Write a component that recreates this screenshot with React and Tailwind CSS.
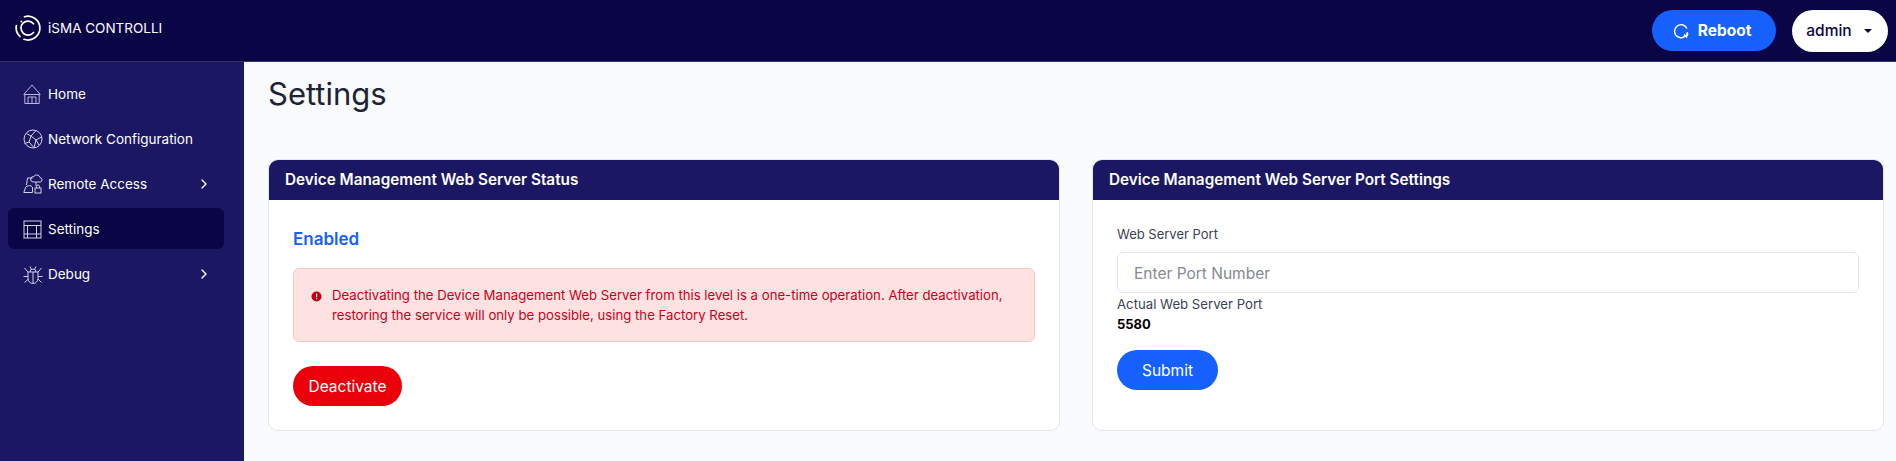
import React from "react";
import { ChevronRight } from "lucide-react";

const HomeIcon = () => (
  <svg width="18" height="20" viewBox="0 0 18 20" fill="none" stroke="#b9b7da" strokeWidth="1">
    <path d="M0.8 10.5 9 1l8.2 9.5Z" />
    <path d="M1.8 10.5v9h14.4v-9" />
    <path d="M5 19.5v-6.5h8v6.5M9 13v6.5" />
  </svg>
);

const NetworkIcon = () => (
  <svg width="20" height="20" viewBox="0 0 20 20" fill="none" stroke="#d3d2e8" strokeWidth="1">
    <circle cx="10" cy="10" r="9" />
    <path d="M3.5 4.5 8 7l5-5.5M8 7l-2 6-4.5 1.5M6 13l5 5.5M8 7l5 4 5.5-3M13 11l-2 7.5M13 11l3 5" />
  </svg>
);

const RemoteIcon = () => (
  <svg width="20" height="20" viewBox="0 0 20 20" fill="none" stroke="#d3d2e8" strokeWidth="1">
    <path d="M10 8H17.3a2.3 2.3 0 0 0-.3-4.5 3.4 3.4 0 0 0-6.2-.9A2.7 2.7 0 0 0 10 8Z" />
    <path d="M9.5 4H4.5L3.5 11M13 8v4" />
    <path d="M0.8 18.5 2.5 13.5a2.5 2.5 0 0 1 3-1.5 2.6 2.6 0 0 1 4 2v4.5Z" />
    <rect x="12" y="14" width="6" height="5" />
    <path d="M13.5 14v-1.5a1.5 1.5 0 0 1 3 0V14" />
  </svg>
);

const SettingsIcon = () => (
  <svg width="19" height="19" viewBox="0 0 19 19" fill="none" stroke="#d3d2e8" strokeWidth="1">
    <rect x="1" y="1" width="17" height="17" />
    <path d="M1 5.5h17M1 14h17M4.5 5.5V18M13.5 5.5V18" />
  </svg>
);

const BugIcon = () => (
  <svg width="20" height="20" viewBox="0 0 20 20" fill="none" stroke="#d3d2e8" strokeWidth="1">
    <path d="M5 8h10v6.5a5 5 0 0 1-10 0Z" />
    <path d="M7 8a3 3 0 0 1 6 0M10 8v11M7 2.5 8.5 5.5M13 2.5 11.5 5.5" />
    <path d="M1.5 4 5 8M18.5 4 15 8M0.5 12.5H5M15 12.5h4.5M1.5 18.5 5.5 15M18.5 18.5l-3.5-3.5" />
  </svg>
);

const Logo = () => (
  <svg width="26" height="26" viewBox="0 0 26 26" fill="none" stroke="#fff" strokeWidth="1.7" strokeLinecap="round">
    <path d="M9.5 1.8A11.9 11.9 0 0 1 24.9 13 11.9 11.9 0 0 1 9 24.3" />
    <path d="M1.4 10.5A12 12 0 0 0 5 21.5" />
    <path d="M6.3 6.5v.01" strokeWidth="2" />
    <path d="M18.5 8.8a7 7 0 1 0 0 8.6" />
  </svg>
);

const menu = [
  { label: "Home", icon: <HomeIcon /> },
  { label: "Network Configuration", icon: <NetworkIcon /> },
  { label: "Remote Access", icon: <RemoteIcon />, arrow: true },
  { label: "Settings", icon: <SettingsIcon />, active: true },
  { label: "Debug", icon: <BugIcon />, arrow: true },
];

const Card = ({ title, children }) => (
  <div className="rounded-[10px] border border-[#e4e6ec] bg-white overflow-hidden h-[272px]">
    <div className="h-[40px] bg-[#1b1763] px-4 pt-[1px] flex items-center text-white text-[15.3px] font-semibold">
      {title}
    </div>
    {children}
  </div>
);

export default function App() {
  return (
    <div className="h-[461px] flex flex-col bg-[#f9fafc] overflow-hidden" style={{ fontFamily: '"Inter", "Liberation Sans", sans-serif' }}>
      <header className="h-[62px] shrink-0 bg-[#0a0545] border-b border-[#34306f] flex items-center justify-between pl-[15px] pr-[8px]">
        <div className="flex items-center gap-[7px] pb-[5px] text-white text-[13.5px]">
          <Logo />
          <span>iSMA CONTROLLI</span>
        </div>
        <div className="flex items-center gap-4">
          <button className="h-[41px] w-[124px] pr-1 rounded-full bg-[#1660fe] text-white text-[15.5px] font-bold flex items-center justify-center gap-[9px]">
            <svg width="16" height="16" viewBox="0 0 16 16" fill="none" stroke="#fff" strokeWidth="1.4">
              <path d="M14 5.5A6.5 6.5 0 1 0 14.5 9" />
              <path d="M15 10.5 13.5 14 11 11.5" />
            </svg>
            Reboot
          </button>
          <button className="h-[42px] w-[96px] pr-[2px] rounded-full bg-white text-[#0a0545] text-[15.5px] font-medium flex items-center justify-center gap-[12px]">
            admin
            <span className="w-0 h-0 border-x-[4px] border-x-transparent border-t-[4px] border-t-[#0a0545]" />
          </button>
        </div>
      </header>
      <div className="flex flex-1 min-h-0">
        <aside className="w-[244px] shrink-0 bg-[#1b1763] pl-2 pr-5 pt-[11px] flex flex-col gap-[4px]">
          {menu.map((m) => (
            <div
              key={m.label}
              className={`h-[41px] rounded-md pl-[15px] pr-[12px] pt-[1px] flex items-center text-white text-[13.5px] ${m.active ? "bg-[#0a0545]" : ""}`}
            >
              <span className="w-[25px] flex justify-start">{m.icon}</span>
              <span className="flex-1">{m.label}</span>
              {m.arrow && <ChevronRight size={16} color="#fff" />}
            </div>
          ))}
        </aside>
        <main className="flex-1 pl-6 pr-[12px]">
          <h1 className="text-[31px] leading-[38px] text-[#1c2434] mt-[13px] mb-[46px]">Settings</h1>
          <div className="grid grid-cols-2 gap-8">
            <Card title="Device Management Web Server Status">
              <div className="px-6 pt-[28px]">
                <div className="text-[#1660fe] text-[17px] font-semibold leading-[22px]">Enabled</div>
                <div className="mt-[18px] h-[74px] rounded-md border border-[#fdc4c4] bg-[#fee2e2] flex items-start gap-[10px] pl-[17px] pr-4 pt-[16px] text-[13.2px] leading-[20px] text-[#c9001a]">
                  <svg width="11" height="11" viewBox="0 0 11 11" className="shrink-0 mt-[6px]">
                    <circle cx="5.5" cy="5.5" r="5" fill="#c00010" />
                    <rect x="5" y="2.5" width="1.2" height="3.8" fill="#fee2e2" />
                    <rect x="5" y="7.2" width="1.2" height="1.2" fill="#fee2e2" />
                  </svg>
                  <p>Deactivating the Device Management Web Server from this level is a one-time operation. After deactivation, restoring the service will only be possible, using the Factory Reset.</p>
                </div>
                <button className="mt-[24px] h-[40px] w-[109px] pt-[1px] rounded-full bg-[#e90009] text-white text-[15.5px]">Deactivate</button>
              </div>
            </Card>
            <Card title="Device Management Web Server Port Settings">
              <div className="px-6 pt-[24px]">
                <label className="block text-[13px] leading-[20px] text-[#3a4254]">Web Server Port</label>
                <input
                  placeholder="Enter Port Number"
                  className="mt-[8px] w-full h-[41px] rounded-md border border-[#e4e6ec] px-4 pt-[2px] text-[15.5px] placeholder:text-[#858a94] outline-none"
                />
                <div className="mt-[1px] text-[13.2px] leading-[20px] text-[#3a4254]">Actual Web Server Port</div>
                <div className="text-[13px] leading-[20px] font-bold text-black">5580</div>
                <button className="mt-[16px] h-[40px] w-[101px] pt-[1px] rounded-full bg-[#1660fe] text-white text-[15.5px]">Submit</button>
              </div>
            </Card>
          </div>
        </main>
      </div>
    </div>
  );
}
